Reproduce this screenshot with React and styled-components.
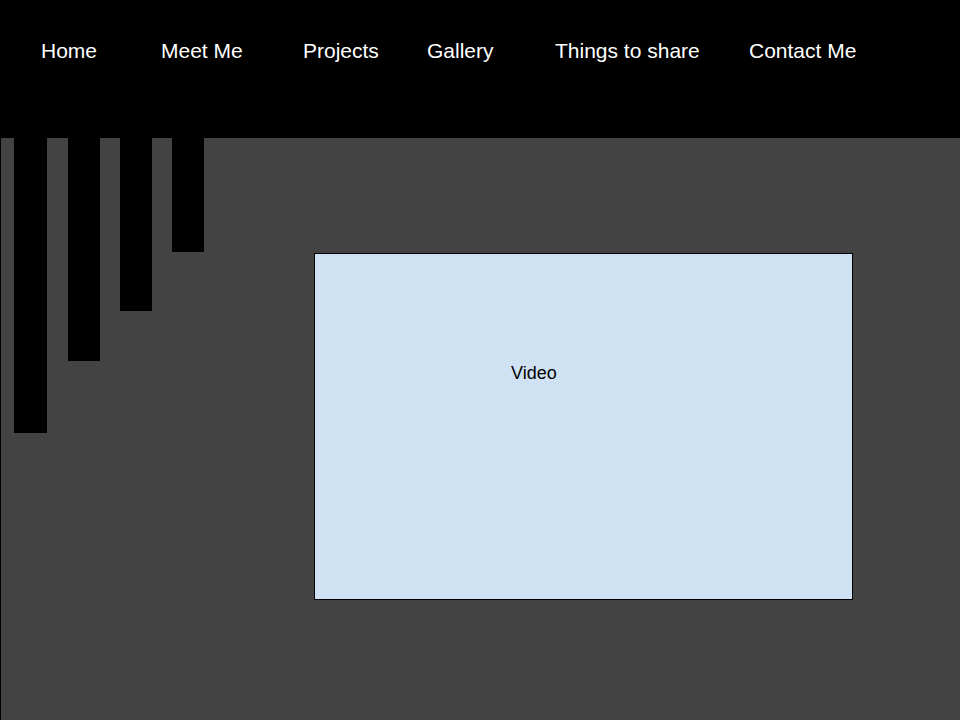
import React from "react";
import styled, { createGlobalStyle } from "styled-components";

const GlobalStyle = createGlobalStyle`
  html, body {
    margin: 0;
    padding: 0;
    background: #434343;
  }
  body {
    font-family: "Liberation Sans", Arial, sans-serif;
  }
`;

const Page = styled.div`
  width: 960px;
  height: 720px;
  display: flex;
  flex-direction: column;
  overflow: hidden;
`;

const Header = styled.header`
  height: 138px;
  flex-shrink: 0;
  background: #000;
  box-sizing: border-box;
  padding: 39px 0 0 41px;
`;

const Nav = styled.nav`
  display: grid;
  grid-template-columns: 120px 142px 124px 128px 194px auto;
`;

const NavItem = styled.a`
  color: #fff;
  font-size: 21px;
  line-height: 24px;
  text-decoration: none;
  white-space: nowrap;
`;

const Main = styled.main`
  flex: 1;
  display: flex;
  align-items: flex-start;
  background: #434343;
  border-left: 1px solid #000;
`;

const Drips = styled.div`
  display: flex;
  align-items: flex-start;
  gap: 20px;
  padding-left: 13px;
`;

const Drip = styled.div`
  width: ${(p) => p.$w}px;
  height: ${(p) => p.$h}px;
  background: #000;
  margin-right: ${(p) => p.$mr || 0}px;
`;

const VideoBox = styled.div`
  box-sizing: border-box;
  width: 539px;
  height: 347px;
  margin: 115px 0 0 110px;
  background: #cfe2f3;
  border: 1px solid #000;
  padding: 109px 0 0 196px;
  color: #000;
  font-size: 18px;
`;

const links = ["Home", "Meet Me", "Projects", "Gallery", "Things to share", "Contact Me"];

const drips = [
  { w: 33, h: 295, mr: 1 },
  { w: 32, h: 223 },
  { w: 32, h: 173 },
  { w: 32, h: 114 },
];

export default function App() {
  return (
    <>
      <GlobalStyle />
      <Page>
        <Header>
          <Nav>
            {links.map((l) => (
              <NavItem key={l}>{l}</NavItem>
            ))}
          </Nav>
        </Header>
        <Main>
          <Drips>
            {drips.map((d, i) => (
              <Drip key={i} $w={d.w} $h={d.h} $mr={d.mr} />
            ))}
          </Drips>
          <VideoBox>Video</VideoBox>
        </Main>
      </Page>
    </>
  );
}
